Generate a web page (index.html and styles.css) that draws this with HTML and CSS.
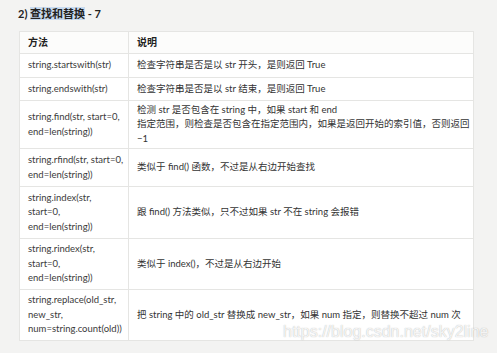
FILE: index.html
```html
<!DOCTYPE html>
<html>
<head>
<meta charset="utf-8">
<link rel="stylesheet" href="styles.css">
</head>
<body>
<div class="page">
  <h2 class="title">2) <span class="sel">查找和替换</span> - 7</h2>
  <table class="tbl">
    <colgroup><col class="c1"><col class="c2"></colgroup>
    <tr class="head h22"><th>方法</th><th>说明</th></tr>
    <tr class="h24"><td>string.startswith(str)</td><td>检查字符串是否是以 str 开头，是则返回 True</td></tr>
    <tr class="h23"><td>string.endswith(str)</td><td>检查字符串是否是以 str 结束，是则返回 True</td></tr>
    <tr class="h48"><td>string.find(str, start=0,<br>end=len(string))</td><td>检测 str 是否包含在 string 中，如果 start 和 end<br>指定范围，则检查是否包含在指定范围内，如果是返回开始的索引值，否则返回<br>−1</td></tr>
    <tr class="h38"><td>string.rfind(str, start=0,<br>end=len(string))</td><td>类似于 find() 函数，不过是从右边开始查找</td></tr>
    <tr class="h52"><td>string.index(str,<br>start=0,<br>end=len(string))</td><td>跟 find() 方法类似，只不过如果 str 不在 string 会报错</td></tr>
    <tr class="h51"><td>string.rindex(str,<br>start=0,<br>end=len(string))</td><td>类似于 index()，不过是从右边开始</td></tr>
    <tr class="h51"><td>string.replace(old_str,<br>new_str,<br>num=string.count(old))</td><td>把 string 中的 old_str 替换成 new_str，如果 num 指定，则替换不超过 num 次</td></tr>
  </table>
  <div class="wm">https://blog.csdn.net/sky2line</div>
</div>
</body>
</html>
```
FILE: styles.css
```css
html, body { margin: 0; padding: 0; }
body {
  background: #f3f3f2;
  font-family: "Lato", "Noto Sans CJK SC", sans-serif;
  color: #333;
  width: 497px;
  height: 353px;
  overflow: hidden;
}
.page { position: relative; padding: 7px 0 0 19px; height: 346px; }
.title {
  margin: 0 0 10px -1px;
  font-size: 11px;
  font-weight: bold;
  line-height: 14px;
  color: #222;
}
.sel { background: #c9dbef; }
.tbl {
  border-collapse: collapse;
  table-layout: fixed;
  width: 454px;
  font-size: 9.5px;
  line-height: 14.5px;
  background: #fff;
}
.c1 { width: 109px; }
.c2 { width: 345px; }
.tbl th, .tbl td {
  border: 1px solid #e5e5e3;
  padding: 0 0 0 8px;
  text-align: left;
  vertical-align: middle;
  white-space: nowrap;
  overflow: hidden;
}
.tbl th { font-weight: bold; color: #222; font-size: 10px; }
.head { background: #fcfcfb; }
.tbl td:first-child { color: #3a3a3a; }
.h22 { height: 22px; }
.h24 { height: 24px; }
.h23 { height: 23px; }
.h48 { height: 48px; }
.h38 { height: 38px; }
.h52 { height: 52px; }
.h51 { height: 51px; }
.wm {
  position: absolute;
  left: 283px;
  top: 322px;
  font-family: "Liberation Sans", sans-serif;
  font-size: 16px;
  line-height: 20px;
  color: rgba(255,255,255,0.85);
  text-shadow: 0 0 1px rgba(120,120,120,0.6);
}
```
